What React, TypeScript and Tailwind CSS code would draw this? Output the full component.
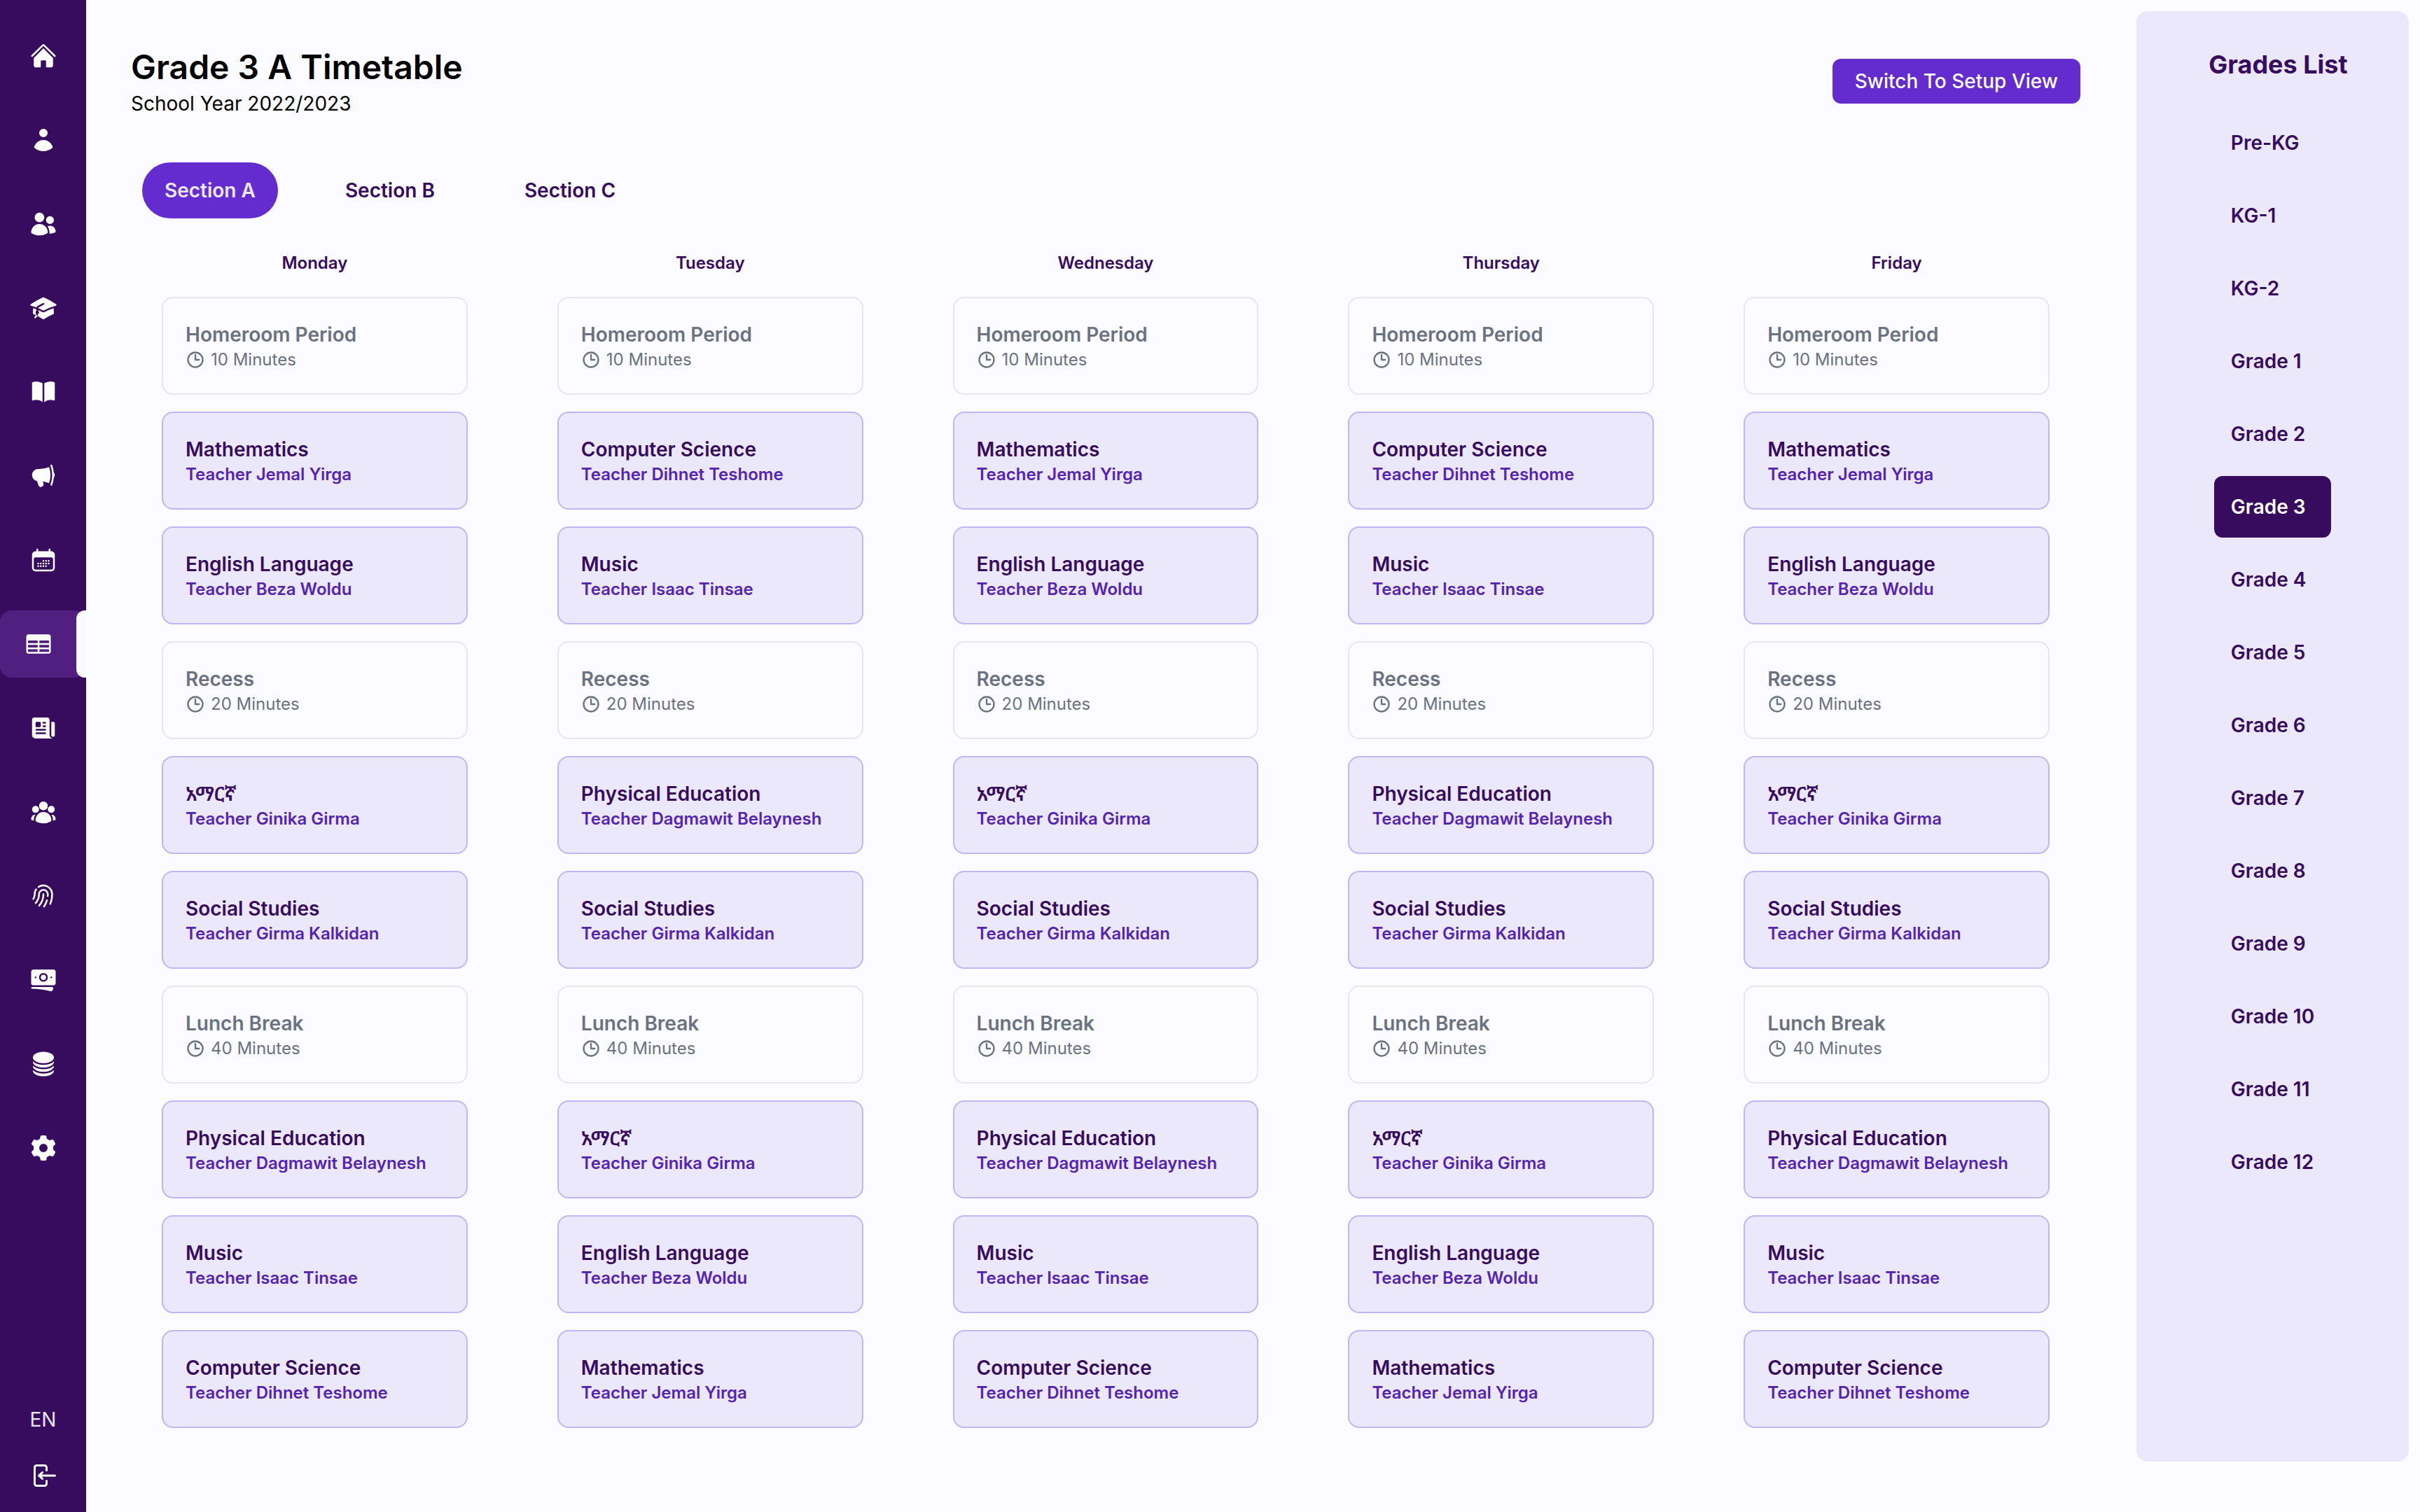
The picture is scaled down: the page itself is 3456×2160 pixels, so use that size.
import type { ReactNode } from "react";
import type { IconType } from "react-icons";
import {
  HiHome,
  HiMiniUser,
  HiUsers,
  HiAcademicCap,
  HiBookOpen,
  HiMegaphone,
  HiCalendarDays,
  HiTableCells,
  HiNewspaper,
  HiUserGroup,
  HiFingerPrint,
  HiBanknotes,
  HiCircleStack,
  HiMiniCog6Tooth,
  HiMiniArrowLeftOnRectangle,
  HiOutlineClock,
} from "react-icons/hi2";

type NavItem = { label: string; icon: IconType };

const navItems: NavItem[] = [
  { label: "Home", icon: HiHome },
  { label: "Profile", icon: HiMiniUser },
  { label: "Guardians", icon: HiUsers },
  { label: "Students", icon: HiAcademicCap },
  { label: "Subjects", icon: HiBookOpen },
  { label: "Announcements", icon: HiMegaphone },
  { label: "Calendar", icon: HiCalendarDays },
  { label: "Timetable", icon: HiTableCells },
  { label: "News", icon: HiNewspaper },
  { label: "Staff", icon: HiUserGroup },
  { label: "Attendance", icon: HiFingerPrint },
  { label: "Payments", icon: HiBanknotes },
  { label: "Records", icon: HiCircleStack },
  { label: "Settings", icon: HiMiniCog6Tooth },
];

type Period =
  | { kind: "break"; name: string; minutes: number }
  | { kind: "class"; name: string; teacher: string };

const homeroom: Period = { kind: "break", name: "Homeroom Period", minutes: 10 };
const recess: Period = { kind: "break", name: "Recess", minutes: 20 };
const lunch: Period = { kind: "break", name: "Lunch Break", minutes: 40 };
const math: Period = { kind: "class", name: "Mathematics", teacher: "Jemal Yirga" };
const computer: Period = { kind: "class", name: "Computer Science", teacher: "Dihnet Teshome" };
const english: Period = { kind: "class", name: "English Language", teacher: "Beza Woldu" };
const music: Period = { kind: "class", name: "Music", teacher: "Isaac Tinsae" };
const amharic: Period = { kind: "class", name: "አማርኛ", teacher: "Ginika Girma" };
const pe: Period = { kind: "class", name: "Physical Education", teacher: "Dagmawit Belaynesh" };
const social: Period = { kind: "class", name: "Social Studies", teacher: "Girma Kalkidan" };

const days = ["Monday", "Tuesday", "Wednesday", "Thursday", "Friday"];

const rows: Period[][] = [
  [homeroom, homeroom, homeroom, homeroom, homeroom],
  [math, computer, math, computer, math],
  [english, music, english, music, english],
  [recess, recess, recess, recess, recess],
  [amharic, pe, amharic, pe, amharic],
  [social, social, social, social, social],
  [lunch, lunch, lunch, lunch, lunch],
  [pe, amharic, pe, amharic, pe],
  [music, english, music, english, music],
  [computer, math, computer, math, computer],
];

const sections = ["Section A", "Section B", "Section C"];

const grades = [
  "Pre-KG", "KG-1", "KG-2", "Grade 1", "Grade 2", "Grade 3", "Grade 4", "Grade 5",
  "Grade 6", "Grade 7", "Grade 8", "Grade 9", "Grade 10", "Grade 11", "Grade 12",
];

function Sidebar() {
  return (
    <nav aria-label="Main" className="flex w-[123px] shrink-0 flex-col justify-between bg-[#370b5e] pt-8 pb-8">
      <ul className="flex flex-col gap-6">
        {navItems.map(({ label, icon: Icon }) => {
          const active = label === "Timetable";
          return (
            <li key={label}>
              <a
                href="#"
                aria-label={label}
                aria-current={active ? "page" : undefined}
                className={
                  active
                    ? "flex h-24 items-stretch rounded-2xl bg-[#501f80] text-white"
                    : "flex h-24 items-stretch text-white"
                }
              >
                <span className="flex flex-1 items-center justify-center">
                  <Icon className="size-10" />
                </span>
                {active && <span className="w-[14px] rounded-l-xl bg-[#fafafa]" />}
              </a>
            </li>
          );
        })}
      </ul>
      <div className="flex flex-col items-center gap-10">
        <button type="button" className="text-[28px] leading-10 text-[#ebe8fb]">
          EN
        </button>
        <button type="button" aria-label="Log out" className="text-white">
          <HiMiniArrowLeftOnRectangle className="size-10" />
        </button>
      </div>
    </nav>
  );
}

function Card({ tone, title, children }: { tone: string; title: string; children: ReactNode }) {
  return (
    <div className={`rounded-2xl border-2 p-8 text-left ${tone}`}>
      <h3 className="truncate text-[28px] leading-10 font-semibold">{title}</h3>
      {children}
    </div>
  );
}

function PeriodCard({ period }: { period: Period }) {
  if (period.kind === "break") {
    return (
      <Card tone="border-gray-200 text-gray-500" title={period.name}>
        <p className="flex items-center gap-2 text-2xl">
          <HiOutlineClock className="size-7" strokeWidth={2} />
          {period.minutes} Minutes
        </p>
      </Card>
    );
  }
  return (
    <Card tone="border-[#c0b5f8] bg-[#ebe8fb] text-[#370b5e]" title={period.name}>
      <p className="text-2xl font-semibold whitespace-nowrap text-[#5423b1]">Teacher {period.teacher}</p>
    </Card>
  );
}

function Timetable() {
  return (
    <table className="mt-8 w-full table-fixed text-[#370b5e]">
      <thead>
        <tr>
          {days.map((day) => (
            <th key={day} scope="col" className="pt-4 pb-5 text-center text-2xl font-semibold">
              {day}
            </th>
          ))}
        </tr>
      </thead>
      <tbody>
        {rows.map((row, i) => (
          <tr key={i}>
            {row.map((period, j) => (
              <td key={j} className="px-16 py-3">
                <PeriodCard period={period} />
              </td>
            ))}
          </tr>
        ))}
      </tbody>
    </table>
  );
}

function GradesList() {
  return (
    <aside className="mt-4 mb-18 flex w-[389px] shrink-0 flex-col items-center rounded-2xl bg-[#ebe8fb] pt-13 text-[#370b5e]">
      <h2 className="pl-4 text-4xl leading-12 font-bold">Grades List</h2>
      <ul className="mt-11 flex flex-col gap-4">
        {grades.map((grade) => (
          <li key={grade}>
            <button
              type="button"
              className={
                grade === "Grade 3"
                  ? "w-full rounded-xl bg-[#370b5e] px-6 py-6 text-left text-[28px] leading-10 font-semibold text-white"
                  : "w-full rounded-xl px-6 py-6 text-left text-[28px] leading-10 font-semibold"
              }
            >
              {grade}
            </button>
          </li>
        ))}
      </ul>
    </aside>
  );
}

export default function App() {
  return (
    <div className="flex min-h-screen bg-[#fcfbff] font-[Inter,'Noto_Sans_Ethiopic','Noto_Sans',sans-serif]">
      <Sidebar />
      <div className="flex min-w-0 flex-1 gap-4 pr-4">
        <main className="min-w-0 flex-1 px-11 pt-16">
          <header className="flex items-center justify-between px-5">
            <div>
              <h1 className="text-5xl leading-16 font-semibold text-black">Grade 3 A Timetable</h1>
              <p className="text-[28px] leading-10 text-black">School Year 2022/2023</p>
            </div>
            <button
              type="button"
              className="rounded-xl bg-[#642bcf] px-8 py-3 text-[28px] leading-10 font-medium text-white"
            >
              Switch To Setup View
            </button>
          </header>
          <div className="mt-16 flex gap-16 px-9">
            {sections.map((section) => (
              <button
                key={section}
                type="button"
                aria-pressed={section === "Section A"}
                className={
                  section === "Section A"
                    ? "rounded-full bg-[#642bcf] px-8 py-5 text-[28px] leading-10 font-semibold text-[#ebe8fb]"
                    : "rounded-full px-8 py-5 text-[28px] leading-10 font-semibold text-[#370b5e]"
                }
              >
                {section}
              </button>
            ))}
          </div>
          <Timetable />
        </main>
        <GradesList />
      </div>
    </div>
  );
}
